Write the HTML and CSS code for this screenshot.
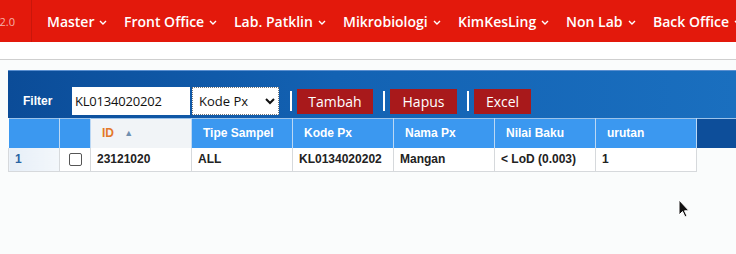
FILE: index.html
```html
<!DOCTYPE html>
<html lang="en">
<head>
  <meta charset="UTF-8">
  <title>Master Nilai Baku</title>
  <link rel="stylesheet" href="styles.css">
</head>
<body>
  <header class="topnav">
    <div class="brand"><span>2.0</span></div>
    <ul class="menu">
      <li>Master <svg class="caret" viewBox="0 0 8 5"><path d="M1 1l3 3 3-3"/></svg></li>
      <li>Front Office <svg class="caret" viewBox="0 0 8 5"><path d="M1 1l3 3 3-3"/></svg></li>
      <li>Lab. Patklin <svg class="caret" viewBox="0 0 8 5"><path d="M1 1l3 3 3-3"/></svg></li>
      <li>Mikrobiologi <svg class="caret" viewBox="0 0 8 5"><path d="M1 1l3 3 3-3"/></svg></li>
      <li>KimKesLing <svg class="caret" viewBox="0 0 8 5"><path d="M1 1l3 3 3-3"/></svg></li>
      <li>Non Lab <svg class="caret" viewBox="0 0 8 5"><path d="M1 1l3 3 3-3"/></svg></li>
      <li>Back Office <svg class="caret" viewBox="0 0 8 5"><path d="M1 1l3 3 3-3"/></svg></li>
    </ul>
  </header>
  <div class="subbar"></div>

  <main class="content">
    <div class="grid-panel">
      <div class="toolbar">
        <span class="filter-label">Filter</span>
        <input class="filter-input" type="text" value="KL0134020202">
        <select class="filter-field">
          <option>Kode Px</option>
          <option>ID</option>
          <option>Nama Px</option>
        </select>
        <span class="sep"></span>
        <button class="btn btn-add">Tambah</button>
        <span class="sep"></span>
        <button class="btn btn-del">Hapus</button>
        <span class="sep"></span>
        <button class="btn btn-xls">Excel</button>
      </div>

      <table class="grid">
        <thead>
          <tr>
            <th class="col-num"></th>
            <th class="col-check"></th>
            <th class="sorted">ID <span class="sort-arrow">&#9650;</span></th>
            <th>Tipe Sampel</th>
            <th>Kode Px</th>
            <th>Nama Px</th>
            <th>Nilai Baku</th>
            <th>urutan</th>
            <th class="filler"></th>
          </tr>
        </thead>
        <tbody>
          <tr>
            <td class="col-num">1</td>
            <td class="col-check"><span class="checkbox"></span></td>
            <td>23121020</td>
            <td>ALL</td>
            <td>KL0134020202</td>
            <td>Mangan</td>
            <td>&lt; LoD (0.003)</td>
            <td>1</td>
            <td class="filler"></td>
          </tr>
        </tbody>
      </table>
    </div>
  </main>

  <svg class="cursor" viewBox="0 0 12 19" width="12" height="19">
    <path d="M1 1v15l3.5-3.5 2.5 5.5 2-1-2.5-5.2H11z" fill="#111" stroke="#fff" stroke-width="1"/>
  </svg>
</body>
</html>
```

FILE: styles.css
```css
* {
  margin: 0;
  padding: 0;
  box-sizing: border-box;
}

body {
  font-family: "Liberation Sans", Arial, sans-serif;
  background-color: #fafcfc;
  color: #222;
  width: 736px;
  height: 254px;
  overflow: hidden;
  position: relative;
}

.topnav {
  height: 42px;
  background-color: #e3190c;
  display: flex;
  align-items: center;
  font-family: "Open Sans", sans-serif;
  color: #fff;
  overflow: hidden;
}

.brand {
  flex: 0 0 32px;
  height: 100%;
  display: flex;
  align-items: center;
  justify-content: flex-end;
  padding-right: 16px;
  font-size: 11px;
  color: #f6b3a8;
  border-right: 1px solid #c9160b;
  overflow: hidden;
}

.menu {
  list-style: none;
  display: flex;
  flex: 0 0 auto;
  margin-left: 15px;
  white-space: nowrap;
}

.menu li {
  font-size: 14px;
  font-weight: 600;
  display: flex;
  align-items: center;
}

.menu li:nth-child(1) { width: 77px; }
.menu li:nth-child(2) { width: 110px; }
.menu li:nth-child(3) { width: 109px; }
.menu li:nth-child(4) { width: 115px; }
.menu li:nth-child(5) { width: 108px; }
.menu li:nth-child(6) { width: 87px; }

.caret {
  width: 8px;
  height: 5px;
  margin-left: 5px;
  margin-top: 3px;
  fill: none;
  stroke: #fff;
  stroke-width: 1.4;
}

.subbar {
  height: 18px;
  background-color: #fff;
  border-bottom: 1px solid #cfcfcf;
}

.content {
  padding: 10px 0 0 8px;
}

.grid-panel {
  width: 728px;
}

.toolbar {
  height: 48px;
  display: flex;
  align-items: center;
  padding: 13px 0 0 15px;
  background: linear-gradient(to right, #0b4c98, #1362b3 45%, #1a6fbf);
  border-top: 1px solid #5a8fd0;
}

.filter-label {
  font-size: 12px;
  font-weight: bold;
  color: #fff;
  width: 49px;
}

.filter-input {
  width: 118px;
  height: 28px;
  border: none;
  padding: 0 3px;
  font-family: "Open Sans", sans-serif;
  font-size: 13px;
  letter-spacing: -0.2px;
  color: #111;
  background: #fff;
  margin-right: 2px;
}

.filter-field {
  width: 87px;
  height: 28px;
  border: 1px dotted #777;
  font-family: "Open Sans", sans-serif;
  font-size: 13px;
  color: #111;
  background: #fff;
  padding-left: 2px;
  margin-right: 1px;
}

.sep {
  width: 2px;
  height: 20px;
  background: #fff;
  margin: 0 5px 0 10px;
}

.btn {
  height: 25px;
  border: none;
  background-color: #a8191b;
  color: #fff;
  font-family: "Open Sans", sans-serif;
  font-size: 14px;
  padding: 0;
}

.btn-add { width: 76px; }
.btn-del { width: 67px; }
.btn-xls { width: 57px; }

.grid {
  border-collapse: collapse;
  border-top: 1px solid #9cc3ea;
  width: 728px;
  table-layout: fixed;
}

.grid th,
.grid td {
  width: 101px;
  text-align: left;
  font-size: 12px;
  font-weight: bold;
  white-space: nowrap;
  overflow: hidden;
}

.grid th {
  height: 29px;
  background-color: #3b98f0;
  color: #fff;
  padding-left: 11px;
  border-right: 1px solid #bcd8f4;
}

.grid td {
  height: 24px;
  background-color: #fff;
  color: #222;
  padding-left: 6px;
  border: 1px solid #d6d9dc;
  border-top: none;
}

.grid th.sorted {
  background-color: #f1f4f7;
  color: #e4782a;
}

.sort-arrow {
  font-size: 9px;
  color: #6f8fb0;
  margin-left: 7px;
  vertical-align: 1px;
}

.grid .col-num {
  width: 51px;
}

.grid td.col-num {
  background: linear-gradient(to right, #e6eef7, #f3f7fb);
  color: #2a64a4;
  padding-left: 6px;
}

.grid .col-check {
  width: 31px;
  padding-left: 0;
  text-align: center;
}

.checkbox {
  display: inline-block;
  width: 13px;
  height: 13px;
  border: 1px solid #555;
  border-radius: 2px;
  background: #fff;
  vertical-align: middle;
}

.grid th.filler {
  width: 40px;
  background-color: #0d4e9a;
  border-right: none;
}

.grid td.filler {
  width: 40px;
  border: none;
  background: transparent;
}

.cursor {
  position: absolute;
  left: 678px;
  top: 199px;
}
```
